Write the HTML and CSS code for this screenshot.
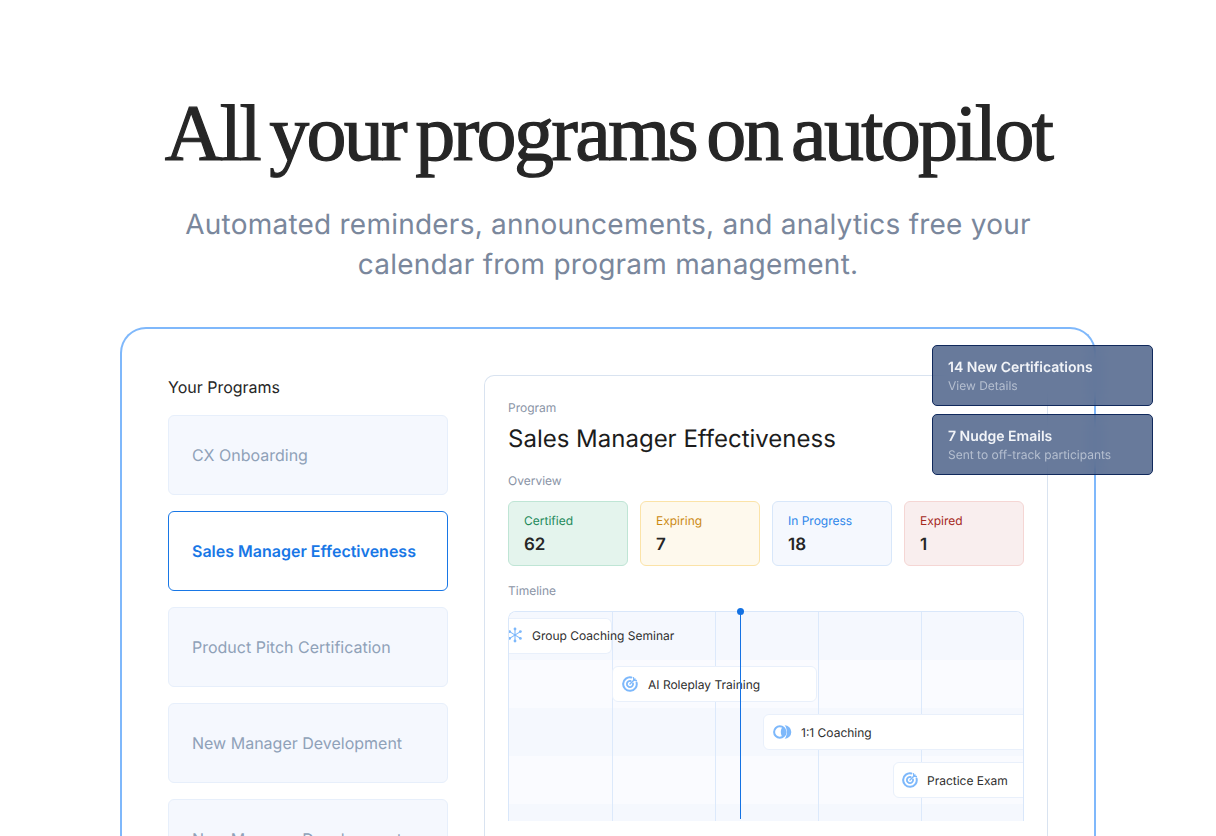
FILE: index.html
```html
<!DOCTYPE html>
<html lang="en">
<head>
<meta charset="utf-8">
<title>All your programs on autopilot</title>
<link rel="stylesheet" href="styles.css">
</head>
<body>
<main class="page">
  <header class="hero">
    <h1>All your programs on autopilot</h1>
    <p>Automated reminders, announcements, and analytics free your calendar from program management.</p>
  </header>
  <section class="stage">
    <div class="card">
      <aside class="programs">
        <h2>Your Programs</h2>
        <div class="program">CX Onboarding</div>
        <div class="program active">Sales Manager Effectiveness</div>
        <div class="program">Product Pitch Certification</div>
        <div class="program">New Manager Development</div>
        <div class="program">New Manager Development</div>
      </aside>
      <div class="panel">
        <div class="label">Program</div>
        <div class="title">Sales Manager Effectiveness</div>
        <div class="label overview">Overview</div>
        <div class="stats">
          <div class="stat green"><span>Certified</span><b>62</b></div>
          <div class="stat amber"><span>Expiring</span><b>7</b></div>
          <div class="stat blue"><span>In Progress</span><b>18</b></div>
          <div class="stat red"><span>Expired</span><b>1</b></div>
        </div>
        <div class="label timeline-label">Timeline</div>
        <div class="timeline-wrap">
          <div class="timeline">
            <div class="band"></div>
            <div class="band alt"></div>
            <div class="band"></div>
            <div class="band alt"></div>
            <div class="band"></div>
            <div class="grid-lines"><i></i><i></i><i></i><i></i><i></i></div>
            <div class="bar bar-1">
              <svg class="ico" viewBox="0 0 16 16" fill="none" stroke="#7db8fb" stroke-width="1.1"><path d="M8 2v12M2.6 4.6l10.8 6.8M13.4 4.6L2.6 11.4"/><g fill="#7db8fb" stroke="none"><circle cx="8" cy="2" r="1.4"/><circle cx="8" cy="14" r="1.4"/><circle cx="2.6" cy="4.6" r="1.4"/><circle cx="13.4" cy="4.6" r="1.4"/><circle cx="2.6" cy="11.4" r="1.4"/><circle cx="13.4" cy="11.4" r="1.4"/></g></svg>
              <span>Group Coaching Seminar</span>
            </div>
            <div class="bar bar-2">
              <svg class="ico" viewBox="0 0 16 16" fill="none" stroke="#7db8fb" stroke-linecap="round"><path d="M14.6 6.6A6.8 6.8 0 1 1 9.4 1.4" stroke-width="2"/><path d="M11 7.3a3.1 3.1 0 1 1-2.3-2.3" stroke-width="1.8"/><path d="M8 8l5-5" stroke-width="1.5"/><path d="M11.5 1.6l.3 2.6 2.6.3" stroke-width="1.3"/></svg>
              <span>AI Roleplay Training</span>
            </div>
            <div class="bar bar-3">
              <svg class="ico wide" viewBox="0 0 19 14"><circle cx="6.8" cy="7" r="5.7" fill="none" stroke="#7db8fb" stroke-width="2"/><path d="M11.6 .3a6.7 6.7 0 0 1 0 13.4c1.5-1.5 2.2-4 2.2-6.7S13.1 1.800 11.6 .3z" fill="#7db8fb"/><path d="M9.9 1.6C8.5 3 7.800 5 7.800 7s.7 4 2.100 5.400C11.300 11 12 9 12 7s-.7-4-2.100-5.400z" fill="#7db8fb"/></svg>
              <span>1:1 Coaching</span>
            </div>
            <div class="bar bar-4">
              <svg class="ico" viewBox="0 0 16 16" fill="none" stroke="#7db8fb" stroke-linecap="round"><path d="M14.6 6.6A6.8 6.8 0 1 1 9.4 1.4" stroke-width="2"/><path d="M11 7.3a3.1 3.1 0 1 1-2.3-2.3" stroke-width="1.8"/><path d="M8 8l5-5" stroke-width="1.5"/><path d="M11.5 1.6l.3 2.6 2.6.3" stroke-width="1.3"/></svg>
              <span>Practice Exam</span>
            </div>
          </div>
          <div class="now"></div>
        </div>
      </div>
    </div>
    <div class="toasts">
      <div class="toast"><strong>14 New Certifications</strong><small>View Details</small></div>
      <div class="toast"><strong>7 Nudge Emails</strong><small>Sent to off-track participants</small></div>
    </div>
  </section>
</main>
</body>
</html>
```
FILE: styles.css
```css
* { box-sizing: border-box; }
html, body { margin: 0; height: 836px; overflow: hidden; background: #fff; }
body { font-family: Inter, "Liberation Sans", sans-serif; color: #262626; text-rendering: geometricPrecision; }
.page { height: 836px; overflow: hidden; }

.hero { display: flex; flex-direction: column; align-items: center; padding-top: 88px; }
.hero h1 {
  margin: 0;
  font-family: "Liberation Serif", serif;
  font-weight: 400;
  font-size: 80px;
  line-height: 92px;
  letter-spacing: -2.7px;
  word-spacing: -7px;
  color: #262626;
  white-space: nowrap;
  -webkit-text-stroke: 1.2px #262626;
}
.hero p {
  margin: 24px 0 0;
  width: 880px;
  text-align: center;
  font-size: 28px;
  line-height: 40px;
  letter-spacing: .23px;
  color: #7a879c;
}

.stage { position: relative; width: 976px; margin: 43px 0 0 120px; }
.card {
  display: flex;
  gap: 36px;
  height: 700px;
  padding: 46px 46px 0;
  border: 2px solid #7fb8fb;
  border-bottom: 0;
  border-radius: 26px 26px 0 0;
  background: #fff;
}

.programs { width: 280px; flex: none; }
.programs h2 { margin: 0 0 16px; font-size: 16px; font-weight: 400; line-height: 24px; color: #262626; }
.program {
  display: flex;
  align-items: center;
  height: 80px;
  margin-bottom: 16px;
  padding: 0 23px;
  border: 1px solid #e7effb;
  border-radius: 6px;
  background: #f5f8fe;
  font-size: 16px;
  color: #8fa1b8;
}
.program.active { background: #fff; border-color: #1877e6; color: #1877e6; font-weight: 600; }

.panel {
  width: 564px;
  flex: none;
  padding: 24px 23px 0;
  border: 1px solid #d9e3f0;
  border-radius: 10px 10px 0 0;
  border-bottom: 0;
}
.label { font-size: 12px; line-height: 16px; color: #8a94a6; }
.title { margin-top: 7px; font-size: 24px; line-height: 32px; color: #1c1c1c; }
.overview { margin-top: 18px; }
.stats { display: grid; grid-template-columns: repeat(4, 120px); gap: 12px; margin-top: 12px; }
.stat { display: flex; flex-direction: column; height: 65px; padding: 11px 15px 0; border: 1px solid; border-radius: 6px; }
.stat span { font-size: 12px; line-height: 16px; }
.stat b { margin-top: 4px; font-size: 17px; line-height: 24px; font-weight: 600; color: #262626; }
.green { background: #e4f4ed; border-color: #bfe5d5; }
.green span { color: #1f8a5b; }
.amber { background: #fef9ed; border-color: #fbe3a8; }
.amber span { color: #cc8a12; }
.blue { background: #f5f8fe; border-color: #d8e7fa; }
.blue span { color: #2d86ea; }
.red { background: #f9eeee; border-color: #f5d6d4; }
.red span { color: #a5281c; }
.timeline-label { margin-top: 17px; }

.timeline-wrap { position: relative; margin-top: 12px; width: 516px; height: 210px; }
.timeline {
  position: relative;
  display: flex;
  flex-direction: column;
  height: 210px;
  overflow: hidden;
  border: 1px solid #d9e7fa;
  border-bottom: 0;
  border-radius: 8px 8px 0 0;
}
.band { height: 48px; flex: none; background: #f5f8fe; }
.band.alt { background: #fafbff; }
.grid-lines { position: absolute; inset: 0; display: grid; grid-template-columns: repeat(5, 103px); }
.grid-lines i { display: block; width: 103.5px; border-right: 1.5px solid #dce9fb; }
.bar {
  position: absolute;
  display: flex;
  align-items: center;
  height: 36px;
  background: #fff;
  border: 1px solid #e9f0fb;
  border-radius: 6px;
  font-size: 12px;
  color: #2e2e2e;
  white-space: nowrap;
}
.ico { width: 16px; height: 16px; flex: none; margin-right: 9px; }
.ico.wide { width: 19px; height: 14px; }
.bar-1 { left: 0; top: 6px; width: 103px; padding-bottom: 2px; border-left: 0; border-radius: 0 6px 6px 0; }
.bar-1 .ico { margin-left: -2px; }
.bar-2 { left: 103px; top: 54px; width: 205px; padding-left: 9px; }
.bar-2 .ico { margin-right: 10px; }
.bar-3 { left: 254px; top: 102px; width: 270px; padding-left: 9px; }
.bar-4 { left: 384px; top: 150px; width: 140px; padding-left: 8px; }
.now { position: absolute; left: 232px; top: 0; bottom: 2px; width: 1px; background: #1472e3; }
.now::before { content: ""; position: absolute; left: -3px; top: -3px; width: 7px; height: 7px; border-radius: 50%; background: #1472e3; }

.toasts { position: absolute; left: 812px; top: 18px; display: flex; flex-direction: column; gap: 8px; width: 221px; }
.toast {
  display: flex;
  flex-direction: column;
  justify-content: center;
  height: 61px;
  padding: 0 15px;
  border: 1px solid #10295c;
  border-radius: 5px;
  background: rgba(40, 66, 112, .7);
  backdrop-filter: blur(8px);
}
.toast strong { font-size: 14px; line-height: 20px; font-weight: 600; color: #f2f4f8; }
.toast small { font-size: 12px; line-height: 16px; color: #b5bfd0; }
```
